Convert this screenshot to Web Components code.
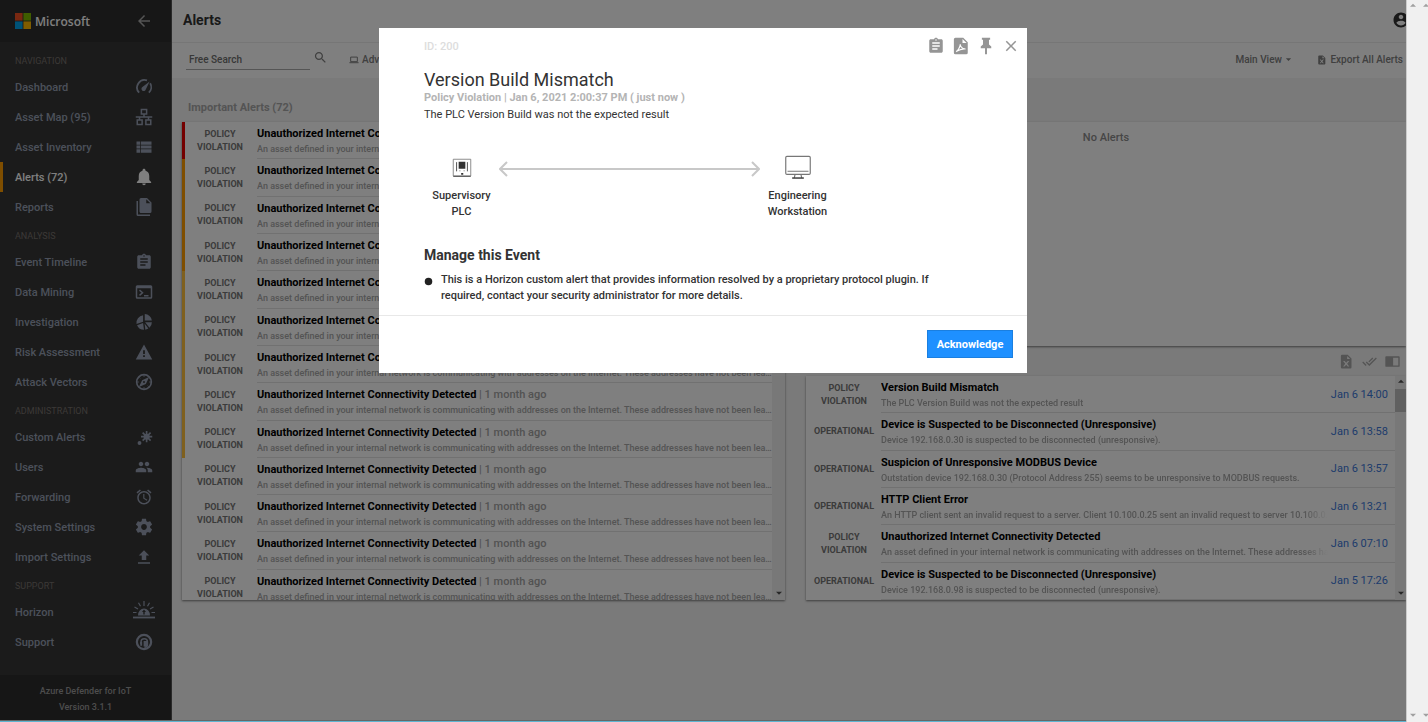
<!DOCTYPE html>
<html lang="en">
<head>
<meta charset="utf-8">
<title>Alerts - Azure Defender for IoT</title>
<style>
  body { margin: 0; font-family: Roboto, "Liberation Sans", sans-serif; }
</style>
</head>
<body>
<defender-app></defender-app>

<script>
'use strict'

const ICONS = {
  back: '<path d="M20 11H7.83l5.59-5.59L12 4l-8 8 8 8 1.41-1.41L7.83 13H20v-2z"/>',
  gauge: '<g fill="none" stroke="currentColor" stroke-width="2.4"><path d="M5.5 19.5A10 10 0 0 1 16 3.2"/><path d="M20.2 7A10 10 0 0 1 18.5 19.5"/></g><path d="M19.5 4.5l-5 10.6a3 3 0 1 1-4.6-3.2z"/>',
  lan: '<g fill="none" stroke="currentColor" stroke-width="2"><path d="M8.5 2h7v6h-7zM3 16h6.5v6H3zM14.5 16H21v6h-6.5zM12 8v4M1 12h22M6 12v4M18 12v4"/></g>',
  list: '<path d="M2 14h5v-4H2v4zm0 5.5h5V15H2v4.5zM2 9h5V4.5H2V9zm6 5h14v-4H8v4zm0 5.5h14V15H8v4.5zM8 4.5V9h14V4.5H8z"/>',
  bell: '<path d="M12 23c1.3 0 2.3-1 2.3-2.2H9.7C9.7 22 10.7 23 12 23zm7-7v-5.500c0-3.400-1.900-6-5-6.700V3c0-1.100-.9-2-2-2s-2 .9-2 2v.8c-3.100.7-5 3.300-5 6.700V16l-2.500 2.500V20h19v-1.500L19 16z"/>',
  files: '<path d="M15,7H20.5L15,1.5V7M8,0H16L22,6V18A2,2 0 0,1 20,20H8C6.890,20 6,19.1 6,18V2A2,2 0 0,1 8,0M4,4V22H20V24H4A2,2 0 0,1 2,22V4H4Z"/>',
  clipboard: '<path d="M19 3h-4.180C14.400 1.840 13.300 1 12 1c-1.300 0-2.400.84-2.820 2H5c-1.100 0-2 .9-2 2v14c0 1.100.9 2 2 2h14c1.100 0 2-.9 2-2V5c0-1.100-.9-2-2-2zm-7 0c.55 0 1 .45 1 1s-.45 1-1 1-1-.45-1-1 .45-1 1-1zm2 14H7v-2h7v2zm3-4H7v-2h10v2zm0-4H7V7h10v2z"/>',
  console: '<path fill-rule="evenodd" d="M3 3h18a2 2 0 0 1 2 2v14a2 2 0 0 1-2 2H3a2 2 0 0 1-2-2V5a2 2 0 0 1 2-2zm0 4v12h18V7z"/><path d="M6 9.500l4 3.500-4 3.500M12 17h6" fill="none" stroke="currentColor" stroke-width="2"/>',
  pie: '<path d="M13 1.500A9.500 9.500 0 0 1 22.500 10H13zM10.800 3v8.500L2 14.500A10 10 0 0 1 10.800 3zM2.800 16.200l8-2.800 1.200 9A9.800 9.800 0 0 1 2.800 16.200zM13.500 12.200h9a10 10 0 0 1-3.200 7.300zM12.800 14l5 6.500-4 1.800z"/>',
  warning: '<path d="M1 22h22L12 2 1 22zm12.200-3.500h-2.400v-2.300h2.400v2.300zm0-4h-2.400V9.800h2.400v4.700z"/>',
  compass: '<circle cx="12" cy="12" r="9.800" fill="none" stroke="currentColor" stroke-width="2.200"/><path fill-rule="evenodd" d="M18.800 5.200l-4.300 9.300-9.300 4.300 4.300-9.300zM12 10.700a1.300 1.300 0 1 0 0 2.600 1.300 1.300 0 0 0 0-2.600z"/><path d="M12 3v2M12 19v2M3 12h2M19 12h2M6 6l1 1M17 17l1 1" stroke="currentColor" stroke-width="1.300"/>',
  burst: '<path d="M15.500 4v15M8 11.500h15M10.200 6.200l10.600 10.600M20.800 6.200L10.200 16.800" stroke="currentColor" stroke-width="2.200"/><circle cx="15.500" cy="11.500" r="4"/><circle cx="6" cy="20" r="2.600"/>',
  people: '<path d="M16 11c1.660 0 2.990-1.340 2.990-3S17.660 5 16 5c-1.660 0-3 1.340-3 3s1.340 3 3 3zm-8 0c1.660 0 2.990-1.340 2.990-3S9.660 5 8 5C6.340 5 5 6.340 5 8s1.340 3 3 3zm0 2c-2.330 0-7 1.170-7 3.500V19h14v-2.500c0-2.330-4.670-3.500-7-3.500zm8 0c-.29 0-.62.02-.97.05 1.160.84 1.970 1.970 1.970 3.450V19h6v-2.500c0-2.330-4.670-3.500-7-3.500z"/>',
  alarm: '<path d="M22 5.720l-4.600-3.860-1.290 1.530 4.600 3.860L22 5.720zM7.880 3.390L6.600 1.860 2 5.710l1.290 1.530 4.590-3.850zM12.500 8H11v6l4.750 2.850.75-1.230-4-2.370V8zM12 4c-4.970 0-9 4.030-9 9s4.020 9 9 9c4.970 0 9-4.030 9-9s-4.030-9-9-9zm0 16c-3.870 0-7-3.130-7-7s3.130-7 7-7 7 3.130 7 7-3.130 7-7 7z"/>',
  gear: '<path transform="translate(-1.200 -1.200) scale(1.1)" d="M19.430 12.980c.04-.32.07-.64.07-.98s-.03-.66-.07-.98l2.110-1.650c.19-.15.24-.42.12-.64l-2-3.460c-.12-.22-.39-.3-.61-.22l-2.490 1c-.52-.4-1.080-.73-1.690-.98l-.38-2.650C14.460 2.180 14.250 2 14 2h-4c-.25 0-.46.18-.49.42l-.38 2.650c-.61.25-1.170.59-1.690.98l-2.490-1c-.23-.09-.49 0-.61.22l-2 3.460c-.13.22-.07.49.12.64l2.110 1.650c-.04.32-.07.65-.07.98s.03.66.07.98l-2.110 1.650c-.19.15-.24.42-.12.64l2 3.460c.12.22.39.3.61.22l2.490-1c.52.4 1.080.73 1.690.98l.38 2.650c.03.24.24.42.49.42h4c.25 0 .46-.18.49-.42l.38-2.650c.61-.25 1.170-.59 1.690-.98l2.490 1c.23.09.49 0 .61-.22l2-3.460c.12-.22.07-.49-.12-.64l-2.110-1.650zM12 15.500c-1.930 0-3.500-1.570-3.500-3.500s1.570-3.500 3.500-3.500 3.500 1.570 3.500 3.500-1.570 3.500-3.500 3.500z"/>',
  upload: '<path d="M9 16h6v-6h4l-7-7-7 7h4zm-5 3h16v2H4z"/>',
  sunrise: '<g transform="translate(0 -3)"><path d="M1 20.500h22" stroke="currentColor" stroke-width="1.800"/><path fill-rule="evenodd" d="M6 18.500a6 7 0 0 1 12 0zM11.300 13.500v1.500H10l2-2.500 2 2.500h-1.300v2.500h-1.400z"/><path d="M12 4v5M6.500 5.800l2 3.400M17.500 5.800l-2 3.400M2.500 10l3.500 2M21.500 10L18 12M1 15.500h3.500M19.500 15.500H23" stroke="currentColor" stroke-width="1.200"/></g>',
  support: '<circle cx="12" cy="12" r="9.500" fill="none" stroke="currentColor" stroke-width="3"/><path d="M8 14.500V12a4.300 4.300 0 0 1 8.600 0v3a4 4 0 0 1-4 4" fill="none" stroke="currentColor" stroke-width="2"/><path d="M11.500 10.500h5V18h-5zM7 12h2.500v5H7z"/>',
  account: '<path d="M12 2C6.480 2 2 6.480 2 12s4.480 10 10 10 10-4.480 10-10S17.520 2 12 2zm0 3c1.660 0 3 1.340 3 3s-1.340 3-3 3-3-1.340-3-3 1.340-3 3-3zm0 14.200c-2.500 0-4.710-1.280-6-3.220.03-1.990 4-3.080 6-3.080 1.990 0 5.970 1.090 6 3.080-1.290 1.940-3.500 3.220-6 3.220z"/>',
  search: '<path d="M15.500 14h-.79l-.28-.27C15.410 12.590 16 11.110 16 9.500 16 5.910 13.090 3 9.500 3S3 5.910 3 9.500 5.910 16 9.500 16c1.610 0 3.090-.59 4.230-1.570l.27.28v.79l5 4.990L20.490 19l-4.990-5zm-6 0C7.010 14 5 11.990 5 9.500S7.010 5 9.500 5 14 7.010 14 9.500 11.990 14 9.500 14z"/>',
  laptop: '<path d="M4 5h16v11H4zM1 18.500h22" fill="none" stroke="currentColor" stroke-width="2.400"/>',
  excel: '<path fill-rule="evenodd" d="M5 1h9l6 6v14a2 2 0 0 1-2 2H5a2 2 0 0 1-2-2V3a2 2 0 0 1 2-2zm8 2v5h5zM6.500 11l3.500 4.500L6.500 20H9l2.500-3 2.500 3h2.500L13 15.500l3.500-4.500H14l-2.500 3L9 11z"/>',
  pdf: '<path fill-rule="evenodd" d="M4.500 1H15l6 6v14a2 2 0 0 1-2 2H4.500a2 2 0 0 1-2-2V3a2 2 0 0 1 2-2zM14 2.500V8h5.500z"/><path d="M5.500 19.500c2-1 5.500-6 5.500-10 0 3.500 3.500 7 7 6.500-4-.6-8.500 1-12.500 3.500z" fill="none" stroke="#fff" stroke-width="1.500"/>',
  checks: '<path d="M18 7l-1.410-1.410-6.340 6.340 1.410 1.410L18 7zm4.240-1.410L11.660 16.170 7.480 12l-1.410 1.410L11.660 19l12-12-1.420-1.410zM.41 13.410L6 19l1.410-1.410L1.830 12 .41 13.410z"/>',
  reader: '<path fill-rule="evenodd" d="M2 3.500h20a1.500 1.500 0 0 1 1.500 1.500v14a1.500 1.500 0 0 1-1.500 1.500H2A1.500 1.500 0 0 1 .5 19V5A1.500 1.500 0 0 1 2 3.500zm11 2.300v12.400h8.300V5.800z"/>',
  pin: '<path d="M16 10V3.500h1.500V1h-11v2.500H8V10l-3 2.500V15h5.700v7.500l1.300.9 1.300-.9V15H19v-2.500z"/>',
  close: '<path d="M19 6.410L17.590 5 12 10.590 6.410 5 5 6.410 10.590 12 5 17.590 6.410 19 12 13.410 17.590 19 19 17.590 13.410 12z"/>',
  plc: '<g fill="none" stroke="currentColor" stroke-width="1"><path d="M1.500 1.500h21v20h-21z" stroke="#777"/><path d="M1.500 22h21M5.500 5v11M18.500 5v11"/></g><path d="M8 4.500h8V13H8zM11 18h2.500v2H11zM9 15h1v1H9zM14 15h1v1h-1z"/>',
  monitor: '<g fill="none" stroke="#777" stroke-width="1"><rect x="1.500" y="2" width="21" height="15.500" rx="1"/><path d="M3 14.800h18M9.500 17.500L8.800 20.500M14.500 17.500l.7 3"/></g><path d="M7 20h10v1.200H7z"/>',
  dots: '<circle cx="12" cy="12" r="10"/>',
  down: '<path d="M3 8h18l-9 9z"/>',
  up: '<path d="M3 17h18L12 8z"/>'
};

class AppIcon extends HTMLElement {
  connectedCallback() {
    this.attachShadow({ mode: 'open' }).innerHTML = `
      <style>
        :host { display: inline-block; flex: none; width: var(--icon-size, 18px); height: var(--icon-size, 18px); }
        svg { display: block; width: 100%; height: 100%; fill: currentColor; }
      </style>
      <svg viewBox="0 0 24 24" aria-hidden="true">${ICONS[this.getAttribute('name')]}</svg>
    `;
  }
}

class NavItem extends HTMLElement {
  connectedCallback() {
    this.attachShadow({ mode: 'open' }).innerHTML = `
      <style>
        :host { display: block; }
        a {
          box-sizing: border-box;
          display: grid;
          grid-template-columns: 1fr 24px;
          align-items: center;
          height: 30px;
          padding: 0 15px 0 12px;
          border-left: 3px solid transparent;
          color: #98a1b5;
          font-size: 11px;
          font-weight: 500;
          text-decoration: none;
        }
        app-icon { justify-self: center; }
        app-icon[name="sunrise"] { --icon-size: 24px; }
        :host([active]) a { border-left-color: #ff9c00; color: #fff; }
      </style>
      <a href="#"><span><slot></slot></span><app-icon name="${this.getAttribute('icon')}"></app-icon></a>
    `;
  }
}

class NavSection extends HTMLElement {
  connectedCallback() {
    this.attachShadow({ mode: 'open' }).innerHTML = `
      <style>
        :host { display: block; }
        h2 {
          margin: 0;
          padding: 3px 15px 0;
          color: #76726e;
          font-size: 9px;
          font-weight: 400;
          line-height: 22px;
          text-transform: uppercase;
        }
      </style>
      <h2>${this.getAttribute('label')}</h2>
      <slot></slot>
    `;
  }
}

class SideNav extends HTMLElement {
  connectedCallback() {
    this.attachShadow({ mode: 'open' }).innerHTML = `
      <style>
        :host { display: flex; flex-direction: column; background: #363636; border-right: 1px solid #555; }
        header {
          display: flex;
          align-items: center;
          justify-content: space-between;
          box-sizing: border-box;
          height: 42px;
          padding: 0 18px 0 15px;
          background: #2e2e2e;
        }
        .brand { display: flex; align-items: center; gap: 4px; color: #fff; font: 600 12px "Open Sans", sans-serif; }
        .brand svg { width: 16px; height: 16px; }
        button { display: flex; padding: 0; border: 0; background: none; color: #aaa; }
        nav { flex: 1; padding-top: 5px; }
        footer {
          padding: 8px 0 5px;
          background: #2d2d2d;
          color: #9a9a9a;
          font-size: 9px;
          font-weight: 500;
          line-height: 16px;
          text-align: center;
        }
      </style>
      <header>
        <div class="brand">
          <svg viewBox="0 0 16 16" aria-hidden="true">
            <path fill="#f25022" d="M0 0h7.600v7.600H0z"/><path fill="#7fba00" d="M8.400 0H16v7.600H8.400z"/>
            <path fill="#00a4ef" d="M0 8.400h7.600V16H0z"/><path fill="#ffb900" d="M8.400 8.400H16V16H8.400z"/>
          </svg>
          <span>Microsoft</span>
        </div>
        <button aria-label="Collapse menu"><app-icon name="back"></app-icon></button>
      </header>
      <nav><slot></slot></nav>
      <footer>Azure Defender for IoT<br>Version 3.1.1</footer>
    `;
  }
}

class PageHeader extends HTMLElement {
  connectedCallback() {
    this.attachShadow({ mode: 'open' }).innerHTML = `
      <style>
        :host {
          display: flex;
          align-items: center;
          justify-content: space-between;
          box-sizing: border-box;
          height: 43px;
          padding: 0 0 3px 11px;
          overflow: hidden;
          border-bottom: 1px solid #ececec;
          background: #fff;
        }
        h1 { margin: 0; color: #333; font-size: 14px; font-weight: 700; }
        button { display: flex; width: 14px; padding: 0; border: 0; background: none; color: #333; }
      </style>
      <h1><slot></slot></h1>
      <button aria-label="Account"><app-icon name="account"></app-icon></button>
    `;
  }
}

class AlertToolbar extends HTMLElement {
  connectedCallback() {
    this.attachShadow({ mode: 'open' }).innerHTML = `
      <style>
        :host {
          display: flex;
          align-items: center;
          box-sizing: border-box;
          height: 35px;
          padding: 0 3px 2px 14px;
          background: #fff;
          color: #808080;
          --icon-size: 10px;
        }
        input, select, button { font: 500 10px Roboto, sans-serif; color: inherit; border: 0; background: none; padding: 0; }
        input { width: 124px; height: 21px; box-sizing: border-box; padding: 0 3px; border-bottom: 1px solid #aaa; outline: 0; }
        input::placeholder { color: #707070; }
        .search { --icon-size: 15px; margin: 0 21px 0 3px; padding-bottom: 4px; }
        button { display: flex; align-items: center; gap: 3px; }
        .view { display: flex; align-items: center; margin-left: auto; margin-right: 25px; gap: 3px; --icon-size: 7px; }
        select { appearance: none; }
      </style>
      <input type="text" placeholder="Free Search" aria-label="Free Search">
      <button class="search" aria-label="Search"><app-icon name="search"></app-icon></button>
      <button><app-icon name="laptop"></app-icon>Advanced Filters</button>
      <div class="view">
        <select aria-label="View"><option>Main View</option></select><app-icon name="down"></app-icon>
      </div>
      <button><app-icon name="excel"></app-icon>Export All Alerts</button>
    `;
  }
}

class AlertRow extends HTMLElement {
  connectedCallback() {
    const ago = this.getAttribute('ago');
    const date = this.getAttribute('date');
    this.attachShadow({ mode: 'open' }).innerHTML = `
      <style>
        :host { display: grid; grid-template-columns: 3px 72px minmax(0, 1fr) auto; min-height: 0; }
        .band { background: var(--band, transparent); }
        :host([level="critical"]) { --band: #e80000; }
        :host([level="major"]) { --band: #ff9c00; }
        :host([level="minor"]) { --band: #ffc13d; }
        .type {
          align-self: center;
          padding-right: 2px;
          color: #767676;
          font-size: 9px;
          font-weight: 700;
          line-height: 13px;
          text-align: center;
          text-transform: uppercase;
        }
        .type span { display: block; }
        .text { padding-top: 4px; border-bottom: 1px solid #e2e2e2; white-space: nowrap; overflow: hidden; }
        h3 { margin: 0; color: #000; font-size: 11px; font-weight: 700; line-height: 16px; }
        small { color: #a4a4a4; font-size: 11px; font-weight: 500; }
        p { margin: 0; overflow: hidden; color: #a8a8a8; font-size: 9px; font-weight: 500; line-height: 14px; text-overflow: ellipsis; }
        time { display: none; align-items: center; padding: 0 7px 0 3px; border-bottom: 1px solid #e2e2e2; color: #3d78d8; font-size: 11px; font-weight: 400; }
        :host([date]) time { display: flex; }
        :host([date]) p { text-overflow: clip; -webkit-mask-image: linear-gradient(to left, transparent, #000 24px); mask-image: linear-gradient(to left, transparent, #000 24px); }
      </style>
      <div class="band"></div>
      <div class="type">${this.getAttribute('type').split(' ').map(w => `<span>${w}</span>`).join('')}</div>
      <div class="text">
        <h3>${this.getAttribute('name')}${ago ? ` <small>| ${ago}</small>` : ''}</h3>
        <p><slot></slot></p>
      </div>
      <time>${date || ''}</time>
    `;
  }
}

class ScrollTrack extends HTMLElement {
  connectedCallback() {
    this.attachShadow({ mode: 'open' }).innerHTML = `
      <style>
        :host {
          display: flex;
          flex-direction: column;
          align-items: center;
          flex: none;
          width: 13px;
          padding: 1px 0 3px;
          box-sizing: border-box;
          background: #f1f1f1;
          color: #505050;
          --icon-size: 8px;
        }
        .thumb { width: 11px; height: 23px; margin-top: 4px; background: #c1c1c1; }
        :host(:not([thumb])) .thumb { visibility: hidden; }
        .end { margin-top: auto; }
      </style>
      <app-icon name="up"></app-icon>
      <div class="thumb"></div>
      <app-icon class="end" name="down"></app-icon>
    `;
  }
}

class AlertPanel extends HTMLElement {
  connectedCallback() {
    this.attachShadow({ mode: 'open' }).innerHTML = `
      <style>
        :host { display: block; }
        header { display: flex; align-items: center; justify-content: space-between; height: 30px; padding: 0 6px; color: #a8a8a8; }
        h2 { margin: 0; font-size: 11px; font-weight: 700; }
        .tools { display: flex; align-items: center; gap: 8px; --icon-size: 15px; }
        .card { display: flex; box-sizing: border-box; height: var(--card-height, 224px); overflow: hidden; background: #fff; box-shadow: 0 1px 2px rgba(0, 0, 0, .5); }
        .list { display: flex; flex-direction: column; flex: 1; min-width: 0; height: var(--list-height, 224px); }
        ::slotted(alert-row) { flex: 1; }
        ::slotted(.empty) { padding-top: 8px; color: #8c8c8c; font-size: 11px; font-weight: 500; line-height: 16px; text-align: center; }
      </style>
      <header><h2>${this.getAttribute('label')}</h2><div class="tools"><slot name="tools"></slot></div></header>
      <div class="card"><div class="list"><slot></slot></div><slot name="scroll"></slot></div>
    `;
  }
}

class AlertDialog extends HTMLElement {
  connectedCallback() {
    this.attachShadow({ mode: 'open' }).innerHTML = `
      <style>
        :host {
          position: absolute;
          inset: 0;
          display: flex;
          align-items: flex-start;
          justify-content: center;
          padding-top: 28px;
          background: rgba(0, 0, 0, .5);
        }
        section { width: 648px; background: #fff; color: #333; }
        .body { padding: 8px 0 11px 45px; }
        .top { display: flex; align-items: center; justify-content: space-between; height: 20px; padding-right: 7px; color: #ddd; font-size: 11px; font-weight: 500; }
        .actions { display: flex; gap: 7px; }
        button { font: inherit; padding: 0; border: 0; background: none; }
        .actions button { display: flex; color: #959595; --icon-size: 18px; }
        h2 { margin: 12px 0 0; font-size: 18px; font-weight: 400; line-height: 24px; }
        p { margin: 0; }
        .meta { color: #b4b4b4; font-size: 11px; font-weight: 700; line-height: 12px; }
        .summary { padding-top: 3px; font-size: 11px; font-weight: 400; line-height: 16px; }
        .route { display: flex; margin-top: 35px; height: 62px; }
        .device { width: 75px; font-size: 11px; font-weight: 500; line-height: 16px; text-align: center; }
        .device app-icon { --icon-size: 20px; display: block; margin: 0 auto 10px; }
        .device app-icon[name="monitor"] { --icon-size: 28px; margin: -4px auto 6px; }
        .device span { display: block; }
        .route svg { width: 261px; height: 20px; color: #c8c8c8; }
        h3 { margin: 25px 0 0; font-size: 14px; font-weight: 700; line-height: 20px; }
        ul { margin: 7px 0 0; padding: 0; list-style: none; }
        li { display: flex; gap: 8px; padding-right: 80px; font-size: 11px; font-weight: 500; line-height: 16px; }
        li app-icon { --icon-size: 9px; margin-top: 5px; color: #222; }
        footer { display: flex; justify-content: flex-end; padding: 14px 14px 15px; border-top: 1px solid #e8e8e8; }
        footer button { width: 86px; height: 28px; border: 1px solid #1a7fe0; background: #1e90ff; color: #fff; font-size: 11px; font-weight: 700; }
      </style>
      <section role="dialog" aria-labelledby="title">
        <div class="body">
          <div class="top">
            <span>ID: 200</span>
            <div class="actions">
              <button aria-label="Copy"><app-icon name="clipboard"></app-icon></button>
              <button aria-label="Export PDF"><app-icon name="pdf"></app-icon></button>
              <button aria-label="Pin"><app-icon name="pin"></app-icon></button>
              <button aria-label="Close"><app-icon name="close"></app-icon></button>
            </div>
          </div>
          <h2 id="title">Version Build Mismatch</h2>
          <p class="meta">Policy Violation | Jan 6, 2021 2:00:37 PM ( just now )</p>
          <p class="summary">The PLC Version Build was not the expected result</p>
          <div class="route">
            <div class="device"><app-icon name="plc"></app-icon><span>Supervisory</span><span>PLC</span></div>
            <svg viewBox="0 0 261 20" aria-hidden="true"><path d="M1 11h259M8 4l-7 7 7 7M253 4l7 7-7 7" fill="none" stroke="currentColor" stroke-width="2"/></svg>
            <div class="device"><app-icon name="monitor"></app-icon><span>Engineering</span><span>Workstation</span></div>
          </div>
          <h3>Manage this Event</h3>
          <ul>
            <li><app-icon name="dots"></app-icon><span>This is a Horizon custom alert that provides information resolved by a proprietary protocol plugin. If required, contact your security administrator for more details.</span></li>
          </ul>
        </div>
        <footer><button>Acknowledge</button></footer>
      </section>
    `;
  }
}

const internetText = 'An asset defined in your internal network is communicating with addresses on the Internet. These addresses have not been learned as valid addresses.';
const levels = ['critical', 'major', 'major', 'major', 'minor', 'minor', 'minor', 'minor', 'minor', '', '', '', ''];

const recent = [
  ['Policy Violation', 'Version Build Mismatch', 'Jan 6 14:00', 'The PLC Version Build was not the expected result'],
  ['Operational', 'Device is Suspected to be Disconnected (Unresponsive)', 'Jan 6 13:58', 'Device 192.168.0.30 is suspected to be disconnected (unresponsive).'],
  ['Operational', 'Suspicion of Unresponsive MODBUS Device', 'Jan 6 13:57', 'Outstation device 192.168.0.30 (Protocol Address 255) seems to be unresponsive to MODBUS requests.'],
  ['Operational', 'HTTP Client Error', 'Jan 6 13:21', 'An HTTP client sent an invalid request to a server. Client 10.100.0.25 sent an invalid request to server 10.100.0.5.'],
  ['Policy Violation', 'Unauthorized Internet Connectivity Detected', 'Jan 6 07:10', internetText],
  ['Operational', 'Device is Suspected to be Disconnected (Unresponsive)', 'Jan 5 17:26', 'Device 192.168.0.98 is suspected to be disconnected (unresponsive).']
];

class DefenderApp extends HTMLElement {
  connectedCallback() {
    this.attachShadow({ mode: 'open' }).innerHTML = `
      <style>
        :host { display: grid; grid-template: minmax(0, 1fr) 2px / minmax(0, 1fr) 22px; height: 100vh; overflow: hidden; }
        .app { position: relative; display: grid; grid-template-columns: 172px minmax(0, 1fr); min-height: 0; overflow: hidden; }
        main { background: #f4f4f4; overflow: hidden; }
        .panels { display: grid; grid-template-columns: 603fr 600fr; gap: 21px; padding: 14px 0 0 10px; }
        .panels > * { min-width: 0; }
        .important { --card-height: 478px; --list-height: 485px; }
        .gutter { display: flex; grid-row: 1 / 3; grid-column: 2; overflow: hidden; box-shadow: inset 1px 0 #ccc; background: #f0f0f0; }
        .gutter scroll-track { background: none; color: #a0a0a0; }
        .strip { border-top: 1px solid #666; background: #5fb4d0; }
        .right scroll-track { width: 11px; }
      </style>
      <div class="app">
        <side-nav>
          <nav-section label="Navigation">
            <nav-item icon="gauge">Dashboard</nav-item>
            <nav-item icon="lan">Asset Map (95)</nav-item>
            <nav-item icon="list">Asset Inventory</nav-item>
            <nav-item icon="bell" active>Alerts (72)</nav-item>
            <nav-item icon="files">Reports</nav-item>
          </nav-section>
          <nav-section label="Analysis">
            <nav-item icon="clipboard">Event Timeline</nav-item>
            <nav-item icon="console">Data Mining</nav-item>
            <nav-item icon="pie">Investigation</nav-item>
            <nav-item icon="warning">Risk Assessment</nav-item>
            <nav-item icon="compass">Attack Vectors</nav-item>
          </nav-section>
          <nav-section label="Administration">
            <nav-item icon="burst">Custom Alerts</nav-item>
            <nav-item icon="people">Users</nav-item>
            <nav-item icon="alarm">Forwarding</nav-item>
            <nav-item icon="gear">System Settings</nav-item>
            <nav-item icon="upload">Import Settings</nav-item>
          </nav-section>
          <nav-section label="Support">
            <nav-item icon="sunrise">Horizon</nav-item>
            <nav-item icon="support">Support</nav-item>
          </nav-section>
        </side-nav>
        <main>
          <page-header>Alerts</page-header>
          <alert-toolbar></alert-toolbar>
          <div class="panels">
            <alert-panel class="important" label="Important Alerts (72)">
              ${levels.map(l => `<alert-row level="${l}" type="Policy Violation" name="Unauthorized Internet Connectivity Detected" ago="1 month ago">${internetText}</alert-row>`).join('')}
              <scroll-track slot="scroll"></scroll-track>
            </alert-panel>
            <div class="right">
              <alert-panel label="Pinned Alerts (0)"><div class="empty">No Alerts</div></alert-panel>
              <alert-panel label="Recent Alerts">
                <app-icon slot="tools" name="excel"></app-icon>
                <app-icon slot="tools" name="checks"></app-icon>
                <app-icon slot="tools" name="reader"></app-icon>
                ${recent.map(([type, name, date, text]) => `<alert-row type="${type}" name="${name}" date="${date}">${text}</alert-row>`).join('')}
                <scroll-track slot="scroll" thumb></scroll-track>
              </alert-panel>
            </div>
          </div>
        </main>
        <alert-dialog></alert-dialog>
      </div>
      <div class="gutter"><scroll-track></scroll-track><scroll-track></scroll-track></div>
      <div class="strip"></div>
    `;
  }
}

customElements.define('app-icon', AppIcon);
customElements.define('nav-item', NavItem);
customElements.define('nav-section', NavSection);
customElements.define('side-nav', SideNav);
customElements.define('page-header', PageHeader);
customElements.define('alert-toolbar', AlertToolbar);
customElements.define('alert-row', AlertRow);
customElements.define('scroll-track', ScrollTrack);
customElements.define('alert-panel', AlertPanel);
customElements.define('alert-dialog', AlertDialog);
customElements.define('defender-app', DefenderApp);
</script>
</body>
</html>
